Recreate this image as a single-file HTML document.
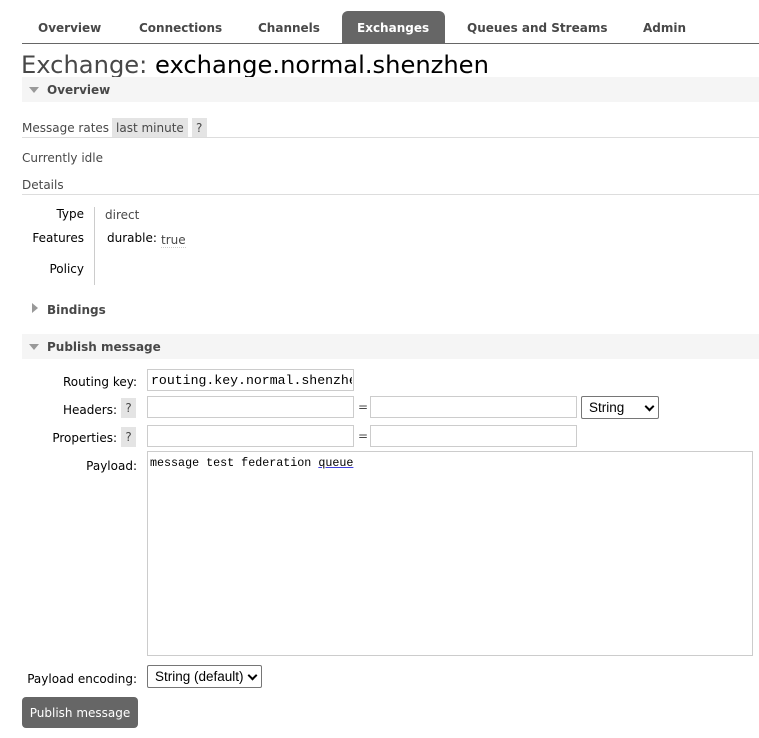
<!DOCTYPE html>
<html><head><meta charset="utf-8"><style>
*{box-sizing:border-box;margin:0;padding:0}
body{width:759px;height:738px;background:#fff;font-family:"DejaVu Sans",Verdana,sans-serif;font-size:12px;color:#484848;position:relative;overflow:hidden}
.a{position:absolute;white-space:nowrap;line-height:14px}
.b{font-weight:bold}
.tab{position:absolute;top:12px;height:32px;line-height:32px;font-weight:bold;font-size:12px;color:#484848}
.bar{position:absolute;left:22px;right:0;height:25px;background:#f5f5f5}
.hl{position:absolute;left:22px;right:0;height:1px;background:#ddd}
.inp{position:absolute;border:1px solid #ccc;background:#fff;height:22px}
.q{position:absolute;background:#e4e4e4;width:15px;height:20px;text-align:center;line-height:21px;color:#484848}
.sel{position:absolute;border:1px solid #767676;border-radius:2px;background:#fff;font-family:"Liberation Sans",Arial,sans-serif;font-size:13.5px;color:#000;line-height:21px;padding-left:7px}
.chev{position:absolute;right:5px;top:6px;width:7px;height:7px;border-right:2px solid #000;border-bottom:2px solid #000;transform:rotate(45deg)}
.mono{font-family:"Liberation Mono",monospace;font-size:12px;color:#000}
.r{text-align:right;color:#000}
</style></head><body>
<div class="tab" style="left:38px">Overview</div>
<div class="tab" style="left:139px">Connections</div>
<div class="tab" style="left:258px">Channels</div>
<div style="position:absolute;left:342px;top:11px;width:103px;height:32px;background:#666;border-radius:6px 6px 0 0"></div>
<div class="tab" style="left:357px;color:#fff">Exchanges</div>
<div class="tab" style="left:467px">Queues and Streams</div>
<div class="tab" style="left:643px">Admin</div>
<div style="position:absolute;left:22px;right:0;top:43px;height:1px;background:#666"></div>

<div class="a" style="left:21px;top:51px;font-size:24.2px;line-height:28px;color:#484848">Exchange: <span style="color:#000">exchange.normal.shenzhen</span></div>

<div class="bar" style="top:77px"></div>
<div style="position:absolute;left:29px;top:87px;border-left:5px solid transparent;border-right:5px solid transparent;border-top:6px solid #999"></div>
<div class="a b" style="left:47px;top:83px">Overview</div>

<div class="a" style="left:22px;top:121px">Message rates</div>
<div style="position:absolute;left:112px;top:118px;width:76px;height:19px;background:#e4e4e4"></div>
<div class="a" style="left:116px;top:121px">last minute</div>
<div style="position:absolute;left:192px;top:118px;width:15px;height:19px;background:#e4e4e4"></div>
<div class="a" style="left:196px;top:121px">?</div>
<div class="hl" style="top:137px"></div>

<div class="a" style="left:22px;top:151px">Currently idle</div>
<div class="a" style="left:22px;top:178px">Details</div>
<div class="hl" style="top:194px"></div>

<div class="a r" style="left:0;width:84px;top:207px">Type</div>
<div class="a r" style="left:0;width:84px;top:231px">Features</div>
<div class="a r" style="left:0;width:84px;top:262px">Policy</div>
<div style="position:absolute;left:94px;top:207px;width:1px;height:78px;background:#ccc"></div>
<div class="a" style="left:105px;top:208px">direct</div>
<div class="a" style="left:107px;top:231px;color:#000">durable:</div>
<div class="a" style="left:161px;top:233px;border-bottom:1px dotted #ccc">true</div>

<div style="position:absolute;left:32px;top:303px;border-top:5px solid transparent;border-bottom:5px solid transparent;border-left:6px solid #999"></div>
<div class="a b" style="left:47px;top:303px">Bindings</div>

<div class="bar" style="top:334px"></div>
<div style="position:absolute;left:29px;top:344px;border-left:5px solid transparent;border-right:5px solid transparent;border-top:6px solid #999"></div>
<div class="a b" style="left:47px;top:340px">Publish message</div>

<div class="a r" style="left:0;width:137px;top:375px">Routing key:</div>
<div class="inp" style="left:147px;top:369px;width:207px"></div>
<div class="a mono" style="left:151px;top:374px;width:201px;overflow:hidden;font-size:13.2px">routing.key.normal.shenzhen</div>

<div class="a r" style="left:0;width:117px;top:403px">Headers:</div>
<div class="q" style="left:121px;top:398px">?</div>
<div class="inp" style="left:147px;top:396px;width:207px"></div>
<div class="a" style="left:358px;top:400px">=</div>
<div class="inp" style="left:370px;top:396px;width:207px"></div>
<div class="sel" style="left:581px;top:396px;width:78px;height:23px">String<div class="chev"></div></div>

<div class="a r" style="left:0;width:117px;top:431px">Properties:</div>
<div class="q" style="left:121px;top:427px">?</div>
<div class="inp" style="left:147px;top:425px;width:207px"></div>
<div class="a" style="left:358px;top:429px">=</div>
<div class="inp" style="left:370px;top:425px;width:207px"></div>

<div class="a r" style="left:0;width:137px;top:459px">Payload:</div>
<div class="inp" style="left:147px;top:451px;width:606px;height:205px"></div>
<div class="a mono" style="left:150px;top:456px;font-size:11.7px">message test federation <span style="text-decoration:underline;text-decoration-color:#4040e0">queue</span></div>

<div class="a r" style="left:0;width:137px;top:672px">Payload encoding:</div>
<div class="sel" style="left:147px;top:665px;width:115px;height:23px">String (default)<div class="chev"></div></div>

<div style="position:absolute;left:22px;top:697px;width:116px;height:31px;background:#666;border-radius:4px;color:#fff;line-height:32px;text-align:center">Publish message</div>
</body></html>
